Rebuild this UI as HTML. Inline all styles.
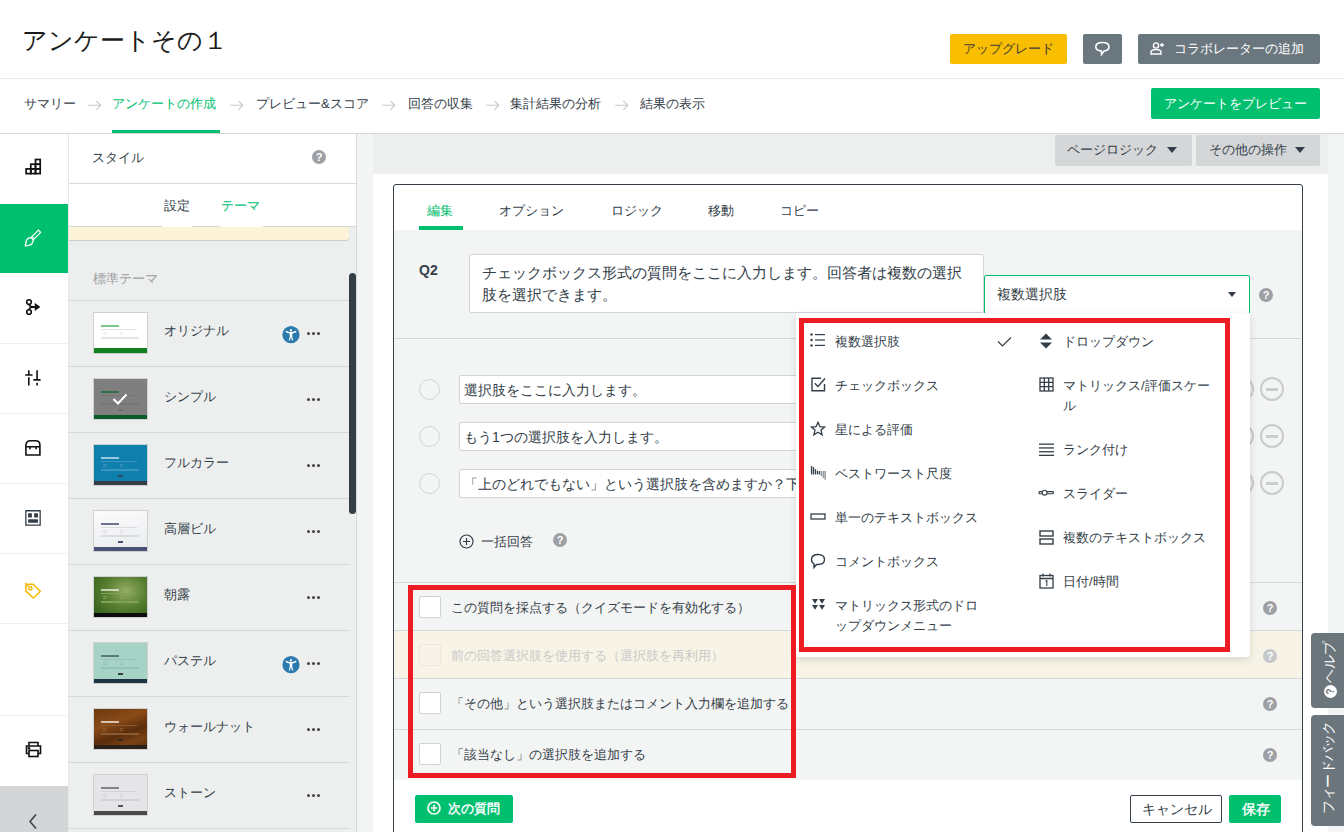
<!DOCTYPE html>
<html><head><meta charset="utf-8">
<style>
*{box-sizing:border-box;margin:0;padding:0}
html,body{width:1344px;height:832px;overflow:hidden;background:#fff;font-family:"Liberation Sans",sans-serif;color:#333e48}
.a{position:absolute}
.t{position:absolute;white-space:nowrap;line-height:1}
.btn{position:absolute;border-radius:2px}
.hl{position:absolute;height:1px;background:#d8d9da}
.q{position:absolute;width:14px;height:14px;border-radius:50%;background:#9da0a4;color:#fff;font-size:11px;font-weight:bold;text-align:center;line-height:14px}
</style></head><body>
<!-- header -->
<div class="t" style="left:22px;top:28px;font-size:25px;color:#1b1b1b">アンケートその１</div>
<div class="btn" style="left:950px;top:34px;width:117px;height:30px;background:#f9be00"></div>
<div class="t" style="left:963px;top:42px;font-size:13px;color:#3b3b3b">アップグレード</div>
<div class="btn" style="left:1083px;top:34px;width:39px;height:30px;background:#6b777e"></div>
<div class="btn" style="left:1138px;top:34px;width:182px;height:30px;background:#6b777e"></div>
<div class="t" style="left:1174px;top:42px;font-size:13px;color:#fff">コラボレーターの追加</div>
<div class="hl" style="left:0;top:78px;width:1344px;background:#eaebec"></div>

<!-- header icons -->
<svg class="a" style="left:1094px;top:41px" width="17" height="15" viewBox="0 0 17 15" fill="none" stroke="#fff" stroke-width="1.6"><path d="M8.5 1.5 C12.5 1.5 15 3 15 5.8 C15 8.3 12.8 9.8 10 10 L7.5 13.5 L7.3 10 C4 9.8 1.8 8.3 1.8 5.8 C1.8 3 4.5 1.5 8.5 1.5 Z"/></svg>
<svg class="a" style="left:1150px;top:42px" width="15" height="13" viewBox="0 0 15 13" fill="none" stroke="#fff" stroke-width="1.4"><circle cx="6" cy="3.5" r="2.6"/><path d="M1 12 V10.5 C1 8.5 3 7.5 6 7.5 C9 7.5 11 8.5 11 10.5 V12 Z"/><path d="M12 1 V5 M10 3 H14" stroke-width="1.3"/></svg>
<!-- nav arrows -->
<svg class="a" style="left:88px;top:100px" width="14" height="11" viewBox="0 0 14 11" fill="none" stroke="#c5c7c9" stroke-width="1.1"><path d="M0.3 5.3 H12.8 M8.3 0.8 L12.8 5.3 L8.3 9.8"/></svg>
<svg class="a" style="left:230px;top:100px" width="14" height="11" viewBox="0 0 14 11" fill="none" stroke="#c5c7c9" stroke-width="1.1"><path d="M0.3 5.3 H12.8 M8.3 0.8 L12.8 5.3 L8.3 9.8"/></svg>
<svg class="a" style="left:382px;top:100px" width="14" height="11" viewBox="0 0 14 11" fill="none" stroke="#c5c7c9" stroke-width="1.1"><path d="M0.3 5.3 H12.8 M8.3 0.8 L12.8 5.3 L8.3 9.8"/></svg>
<svg class="a" style="left:486px;top:100px" width="14" height="11" viewBox="0 0 14 11" fill="none" stroke="#c5c7c9" stroke-width="1.1"><path d="M0.3 5.3 H12.8 M8.3 0.8 L12.8 5.3 L8.3 9.8"/></svg>
<svg class="a" style="left:615px;top:100px" width="14" height="11" viewBox="0 0 14 11" fill="none" stroke="#c5c7c9" stroke-width="1.1"><path d="M0.3 5.3 H12.8 M8.3 0.8 L12.8 5.3 L8.3 9.8"/></svg>

<!-- nav -->
<div class="t" style="left:24px;top:97px;font-size:13px">サマリー</div>
<div class="t" style="left:112px;top:97px;font-size:13px;color:#00bf6f">アンケートの作成</div>
<div class="a" style="left:112px;top:130px;width:108px;height:3px;background:#00bf6f"></div>
<div class="t" style="left:256px;top:97px;font-size:13px">プレビュー&amp;スコア</div>
<div class="t" style="left:408px;top:97px;font-size:13px">回答の収集</div>
<div class="t" style="left:510px;top:97px;font-size:13px">集計結果の分析</div>
<div class="t" style="left:640px;top:97px;font-size:13px">結果の表示</div>
<div class="btn" style="left:1151px;top:88px;width:169px;height:31px;background:#00bf6f"></div>
<div class="t" style="left:1164px;top:97px;font-size:13px;color:#fff">アンケートをプレビュー</div>
<div class="hl" style="left:0;top:133px;width:1344px;background:#d4d5d6"></div>

<!-- left icon bar -->
<div class="a" style="left:0;top:134px;width:68px;height:698px;background:#fff"></div>
<div class="a" style="left:0;top:204px;width:68px;height:69px;background:#00bf6f"></div>
<div class="a" style="left:0;top:786px;width:68px;height:46px;background:#d4d5d7"></div>

<!-- theme panel -->
<div class="a" style="left:68px;top:134px;width:289px;height:698px;background:#edeeee;border-left:1px solid #e6e7e8;border-right:1px solid #d8d9da"></div>
<div class="a" style="left:69px;top:134px;width:287px;height:93px;background:#fff"></div>
<div class="hl" style="left:69px;top:183px;width:287px;background:#d8d9da"></div>
<div class="t" style="left:92px;top:151px;font-size:13px">スタイル</div>
<div class="q" style="left:312px;top:150px">?</div>
<div class="t" style="left:164px;top:199px;font-size:13px">設定</div>
<div class="t" style="left:221px;top:199px;font-size:13px;color:#00bf6f">テーマ</div>
<div class="hl" style="left:69px;top:226px;width:287px;background:#d8d9da"></div><div class="a" style="left:69px;top:227px;width:280px;height:13px;background:#fcf3d9;border-radius:0 0 3px 0;box-shadow:0 1px 1px rgba(0,0,0,.15)"></div>
<div class="a" style="left:162px;top:226px;width:30px;height:1px;background:#fff"></div><div class="a" style="left:220px;top:226px;width:43px;height:1px;background:#fff"></div>
<div class="t" style="left:93px;top:272px;font-size:13px;color:#9b9ea1">標準テーマ</div>
<div class="a" style="left:349px;top:273px;width:7px;height:241px;background:#333e48;border-radius:4px"></div>

<!-- main -->
<div class="a" style="left:357px;top:134px;width:987px;height:698px;background:#f3f4f4"></div>
<div class="a" style="left:373px;top:134px;width:955px;height:40px;background:#edeeee"></div>
<div class="a" style="left:373px;top:174px;width:955px;height:658px;background:#fff"></div>
<div class="btn" style="left:1055px;top:135px;width:137px;height:31px;background:#d5d6d8"></div>
<div class="t" style="left:1067px;top:143px;font-size:13px">ページロジック</div>
<div class="btn" style="left:1196px;top:135px;width:124px;height:31px;background:#d5d6d8"></div>
<div class="t" style="left:1209px;top:143px;font-size:13px">その他の操作</div>
<div class="a" style="left:1167px;top:147px;width:0;height:0;border-left:5.5px solid transparent;border-right:5.5px solid transparent;border-top:6px solid #333e48"></div>
<div class="a" style="left:1295px;top:147px;width:0;height:0;border-left:5.5px solid transparent;border-right:5.5px solid transparent;border-top:6px solid #333e48"></div>

<!-- card -->
<div class="a" style="left:393px;top:184px;width:910px;height:660px;border:1px solid #333e48;border-radius:3px;background:#fff"></div>
<div class="a" style="left:394px;top:230px;width:908px;height:550px;background:#f3f4f4"></div>
<div class="t" style="left:427px;top:204px;font-size:13px;color:#00bf6f">編集</div>
<div class="a" style="left:419px;top:226px;width:44px;height:4px;background:#00bf6f"></div>
<div class="t" style="left:499px;top:204px;font-size:13px">オプション</div>
<div class="t" style="left:611px;top:204px;font-size:13px">ロジック</div>
<div class="t" style="left:708px;top:204px;font-size:13px">移動</div>
<div class="t" style="left:780px;top:204px;font-size:13px">コピー</div>


<!-- icon bar icons -->
<div class="hl" style="left:0;top:343px;width:68px;background:#eeeff0"></div>
<div class="hl" style="left:0;top:413px;width:68px;background:#eeeff0"></div>
<div class="hl" style="left:0;top:483px;width:68px;background:#eeeff0"></div>
<div class="hl" style="left:0;top:553px;width:68px;background:#eeeff0"></div>
<div class="hl" style="left:0;top:623px;width:68px;background:#eeeff0"></div>
<div class="hl" style="left:0;top:715px;width:68px;background:#eeeff0"></div>
<svg class="a" style="left:24px;top:158px" width="18" height="19" viewBox="0 0 18 19" fill="none" stroke="#111" stroke-width="1.7">
<rect x="11.5" y="1.5" width="4.7" height="4.7"/><rect x="6.8" y="6.2" width="4.7" height="4.7"/><rect x="11.5" y="6.2" width="4.7" height="4.7"/>
<rect x="2.1" y="10.9" width="4.7" height="4.7"/><rect x="6.8" y="10.9" width="4.7" height="4.7"/><rect x="11.5" y="10.9" width="4.7" height="4.7"/></svg>
<svg class="a" style="left:24px;top:229px" width="18" height="19" viewBox="0 0 18 19" fill="none" stroke="#fff" stroke-width="1.3" stroke-linejoin="round">
<path d="M14.4 1.1 L16.7 3.4 L9.2 10.9 L6.9 8.6 Z M7.9 7.6 L10.2 9.9"/><path d="M6.9 8.7 C4.2 8.6 2 10.6 2 13.4 L1.3 16.9 L4.6 16.3 C7.3 16.3 9.3 14 9.2 11"/></svg>
<svg class="a" style="left:24px;top:298px" width="18" height="18" viewBox="0 0 18 18" fill="none" stroke="#111" stroke-width="1.6">
<circle cx="5" cy="4" r="2.3"/><circle cx="5" cy="14" r="2.3"/><path d="M5 6.3 C5 9 8 9 12 9 M5 11.7 C5 9 8 9 12 9"/><path d="M11.5 6.5 L15 9 L11.5 11.5 Z" fill="#111"/></svg>
<svg class="a" style="left:24px;top:368px" width="18" height="20" viewBox="0 0 18 20" fill="none" stroke="#111" stroke-width="1.6">
<path d="M4.8 2.2 V7 M4.8 9.3 V17.5 M1.2 7 H8.5 M13.1 2.2 V11.9 M13.1 14.8 V17.5 M9.4 11.9 H16.6"/></svg>
<svg class="a" style="left:24px;top:438px" width="18" height="20" viewBox="0 0 18 20" fill="none" stroke="#111" stroke-width="1.6">
<path d="M1.9 17 V7 C1.9 4.5 3.8 2.8 6.3 2.8 H11.5 C14 2.8 15.9 4.5 15.9 7 V17 Z M1.9 8.8 H15.9 M6 8.8 V11.3 M12.1 8.8 V11.3"/></svg>
<svg class="a" style="left:24px;top:508px" width="18" height="20" viewBox="0 0 18 20" fill="#333e48" stroke="none">
<path d="M1.2 2.1 H16.8 V17.7 H1.2 Z M2.5 3.4 V16.4 H15.5 V3.4 Z"/><rect x="4.1" y="5.2" width="3.8" height="4.4" rx=".6"/><rect x="10.1" y="5.2" width="3.9" height="4.4" rx=".6"/><rect x="4.1" y="11.2" width="9.9" height="3.6" rx=".6"/></svg>
<svg class="a" style="left:24px;top:580px" width="18" height="20" viewBox="0 0 18 20" fill="none" stroke="#f7b900" stroke-width="1.5" stroke-linejoin="round">
<path d="M2 6.2 C2 5 2.8 4.2 4 4.2 H9.1 L16.3 11.25 L9.3 18 L1.9 11.1 Z"/><circle cx="6.3" cy="8.4" r="1.7"/><path d="M1.3 3.1 L4.3 6.3"/></svg>
<svg class="a" style="left:25px;top:741px" width="17" height="17" viewBox="0 0 17 17" fill="none" stroke="#111" stroke-width="1.6">
<path d="M4 5 V1.5 H13 V5"/><path d="M4 12.5 H1.5 V5 H15.5 V12.5 H13"/><rect x="4" y="9.5" width="9" height="6"/><circle cx="4" cy="7.3" r=".6" fill="#111"/></svg>
<svg class="a" style="left:28px;top:813px" width="10" height="17" viewBox="0 0 10 17" fill="none" stroke="#333e48" stroke-width="1.5"><path d="M8 1.5 L2 8.5 L8 15.5"/></svg>

<!-- theme list -->
<div class="hl" style="left:69px;top:300px;width:280px;background:#d4d6d8"></div>
<div class="t" style="left:164px;top:324px;font-size:13px">オリジナル</div>
<div class="a" style="left:307px;top:332px;width:3px;height:3px;border-radius:50%;background:#444;box-shadow:5px 0 0 #444,10px 0 0 #444"></div>
<div class="hl" style="left:69px;top:366px;width:280px;background:#d4d6d8"></div>
<div class="t" style="left:164px;top:390px;font-size:13px">シンプル</div>
<div class="a" style="left:307px;top:398px;width:3px;height:3px;border-radius:50%;background:#444;box-shadow:5px 0 0 #444,10px 0 0 #444"></div>
<div class="hl" style="left:69px;top:432px;width:280px;background:#d4d6d8"></div>
<div class="t" style="left:164px;top:456px;font-size:13px">フルカラー</div>
<div class="a" style="left:307px;top:464px;width:3px;height:3px;border-radius:50%;background:#444;box-shadow:5px 0 0 #444,10px 0 0 #444"></div>
<div class="hl" style="left:69px;top:498px;width:280px;background:#d4d6d8"></div>
<div class="t" style="left:164px;top:522px;font-size:13px">高層ビル</div>
<div class="a" style="left:307px;top:530px;width:3px;height:3px;border-radius:50%;background:#444;box-shadow:5px 0 0 #444,10px 0 0 #444"></div>
<div class="hl" style="left:69px;top:564px;width:280px;background:#d4d6d8"></div>
<div class="t" style="left:164px;top:588px;font-size:13px">朝露</div>
<div class="a" style="left:307px;top:596px;width:3px;height:3px;border-radius:50%;background:#444;box-shadow:5px 0 0 #444,10px 0 0 #444"></div>
<div class="hl" style="left:69px;top:630px;width:280px;background:#d4d6d8"></div>
<div class="t" style="left:164px;top:654px;font-size:13px">パステル</div>
<div class="a" style="left:307px;top:662px;width:3px;height:3px;border-radius:50%;background:#444;box-shadow:5px 0 0 #444,10px 0 0 #444"></div>
<div class="hl" style="left:69px;top:696px;width:280px;background:#d4d6d8"></div>
<div class="t" style="left:164px;top:720px;font-size:13px">ウォールナット</div>
<div class="a" style="left:307px;top:728px;width:3px;height:3px;border-radius:50%;background:#444;box-shadow:5px 0 0 #444,10px 0 0 #444"></div>
<div class="hl" style="left:69px;top:762px;width:280px;background:#d4d6d8"></div>
<div class="t" style="left:164px;top:786px;font-size:13px">ストーン</div>
<div class="a" style="left:307px;top:794px;width:3px;height:3px;border-radius:50%;background:#444;box-shadow:5px 0 0 #444,10px 0 0 #444"></div>
<div class="hl" style="left:69px;top:828px;width:280px;background:#d4d6d8"></div>
<div class="a" style="left:93px;top:312px;width:55px;height:42px;background:#fff;border:1px solid #cfd0d2;overflow:hidden"><div class="a" style="left:7px;top:12px;width:18px;height:2px;background:#5cb870;opacity:.8"></div><div class="a" style="left:7px;top:16px;width:36px;height:1px;background:#e4e4e4"></div><div class="a" style="left:9px;top:19px;width:4px;height:1px;background:#e4e4e4"></div><div class="a" style="left:26px;top:19px;width:3px;height:1px;background:#e4e4e4"></div><div class="a" style="left:9px;top:21px;width:4px;height:1px;background:#e4e4e4"></div><div class="a" style="left:26px;top:21px;width:3px;height:1px;background:#e4e4e4"></div><div class="a" style="left:7px;top:24px;width:38px;height:2px;background:#e4e4e4"></div><div class="a" style="left:24px;top:30px;width:5px;height:2px;background:#fff"></div><div class="a" style="left:0;bottom:0;width:53px;height:5px;background:#11801e"></div></div>
<div class="a" style="left:93px;top:378px;width:55px;height:42px;background:#7f7f7f;border:1px solid #cfd0d2;overflow:hidden"><div class="a" style="left:7px;top:12px;width:18px;height:2px;background:#1e6a3c;opacity:.8"></div><div class="a" style="left:7px;top:16px;width:36px;height:1px;background:#767676"></div><div class="a" style="left:9px;top:19px;width:4px;height:1px;background:#767676"></div><div class="a" style="left:26px;top:19px;width:3px;height:1px;background:#767676"></div><div class="a" style="left:9px;top:21px;width:4px;height:1px;background:#767676"></div><div class="a" style="left:26px;top:21px;width:3px;height:1px;background:#767676"></div><div class="a" style="left:7px;top:24px;width:38px;height:2px;background:#767676"></div><div class="a" style="left:24px;top:30px;width:5px;height:2px;background:#707070"></div><div class="a" style="left:0;bottom:0;width:53px;height:4px;background:#0c5b2c"></div></div>
<div class="a" style="left:93px;top:444px;width:55px;height:42px;background:#0f7fad;border:1px solid #cfd0d2;overflow:hidden"><div class="a" style="left:7px;top:12px;width:18px;height:2px;background:#bcd9e8;opacity:.8"></div><div class="a" style="left:7px;top:16px;width:36px;height:1px;background:#3c95bf"></div><div class="a" style="left:9px;top:19px;width:4px;height:1px;background:#3c95bf"></div><div class="a" style="left:26px;top:19px;width:3px;height:1px;background:#3c95bf"></div><div class="a" style="left:9px;top:21px;width:4px;height:1px;background:#3c95bf"></div><div class="a" style="left:26px;top:21px;width:3px;height:1px;background:#3c95bf"></div><div class="a" style="left:7px;top:24px;width:38px;height:2px;background:#3c95bf"></div><div class="a" style="left:24px;top:30px;width:5px;height:2px;background:#2b4a5c"></div><div class="a" style="left:0;bottom:0;width:53px;height:4px;background:#333e48"></div></div>
<div class="a" style="left:93px;top:510px;width:55px;height:42px;background:linear-gradient(170deg,#fbfbfb,#e9ebee);border:1px solid #cfd0d2;overflow:hidden"><div class="a" style="left:7px;top:12px;width:18px;height:2px;background:#4a5175;opacity:.8"></div><div class="a" style="left:7px;top:16px;width:36px;height:1px;background:#dadbdf"></div><div class="a" style="left:9px;top:19px;width:4px;height:1px;background:#dadbdf"></div><div class="a" style="left:26px;top:19px;width:3px;height:1px;background:#dadbdf"></div><div class="a" style="left:9px;top:21px;width:4px;height:1px;background:#dadbdf"></div><div class="a" style="left:26px;top:21px;width:3px;height:1px;background:#dadbdf"></div><div class="a" style="left:7px;top:24px;width:38px;height:2px;background:#dadbdf"></div><div class="a" style="left:24px;top:30px;width:5px;height:2px;background:#4a5175"></div><div class="a" style="left:0;bottom:0;width:53px;height:4px;background:#4a5175"></div></div>
<div class="a" style="left:93px;top:576px;width:55px;height:42px;background:radial-gradient(ellipse at 60% 35%,#95ad66,#587f30 45%,#2f5a18);border:1px solid #cfd0d2;overflow:hidden"><div class="a" style="left:7px;top:12px;width:18px;height:2px;background:#dfe8cf;opacity:.8"></div><div class="a" style="left:7px;top:16px;width:36px;height:1px;background:#80a05a"></div><div class="a" style="left:9px;top:19px;width:4px;height:1px;background:#80a05a"></div><div class="a" style="left:26px;top:19px;width:3px;height:1px;background:#80a05a"></div><div class="a" style="left:9px;top:21px;width:4px;height:1px;background:#80a05a"></div><div class="a" style="left:26px;top:21px;width:3px;height:1px;background:#80a05a"></div><div class="a" style="left:7px;top:24px;width:38px;height:2px;background:#80a05a"></div><div class="a" style="left:24px;top:30px;width:5px;height:2px;background:#5c7a3a"></div><div class="a" style="left:0;bottom:0;width:53px;height:4px;background:#0d0d0d"></div></div>
<div class="a" style="left:93px;top:642px;width:55px;height:42px;background:#a7d3c6;border:1px solid #cfd0d2;overflow:hidden"><div class="a" style="left:7px;top:12px;width:18px;height:2px;background:#4a6464;opacity:.8"></div><div class="a" style="left:7px;top:16px;width:36px;height:1px;background:#94c2b5"></div><div class="a" style="left:9px;top:19px;width:4px;height:1px;background:#94c2b5"></div><div class="a" style="left:26px;top:19px;width:3px;height:1px;background:#94c2b5"></div><div class="a" style="left:9px;top:21px;width:4px;height:1px;background:#94c2b5"></div><div class="a" style="left:26px;top:21px;width:3px;height:1px;background:#94c2b5"></div><div class="a" style="left:7px;top:24px;width:38px;height:2px;background:#94c2b5"></div><div class="a" style="left:24px;top:30px;width:5px;height:2px;background:#2f3f45"></div><div class="a" style="left:0;bottom:0;width:53px;height:4px;background:#1f3443"></div></div>
<div class="a" style="left:93px;top:708px;width:55px;height:42px;background:linear-gradient(160deg,#6b3a12,#8a4a17 35%,#5a2d0c 60%,#7c4215 80%,#4e270b);border:1px solid #cfd0d2;overflow:hidden"><div class="a" style="left:7px;top:12px;width:18px;height:2px;background:#efe2d4;opacity:.8"></div><div class="a" style="left:7px;top:16px;width:36px;height:1px;background:#8c5a30"></div><div class="a" style="left:9px;top:19px;width:4px;height:1px;background:#8c5a30"></div><div class="a" style="left:26px;top:19px;width:3px;height:1px;background:#8c5a30"></div><div class="a" style="left:9px;top:21px;width:4px;height:1px;background:#8c5a30"></div><div class="a" style="left:26px;top:21px;width:3px;height:1px;background:#8c5a30"></div><div class="a" style="left:7px;top:24px;width:38px;height:2px;background:#8c5a30"></div><div class="a" style="left:24px;top:30px;width:5px;height:2px;background:#3a2a1e"></div><div class="a" style="left:0;bottom:0;width:53px;height:4px;background:#2b211a"></div></div>
<div class="a" style="left:93px;top:774px;width:55px;height:42px;background:#e4e4e9;border:1px solid #cfd0d2;overflow:hidden"><div class="a" style="left:7px;top:12px;width:18px;height:2px;background:#6a6a70;opacity:.8"></div><div class="a" style="left:7px;top:16px;width:36px;height:1px;background:#d2d2d8"></div><div class="a" style="left:9px;top:19px;width:4px;height:1px;background:#d2d2d8"></div><div class="a" style="left:26px;top:19px;width:3px;height:1px;background:#d2d2d8"></div><div class="a" style="left:9px;top:21px;width:4px;height:1px;background:#d2d2d8"></div><div class="a" style="left:26px;top:21px;width:3px;height:1px;background:#d2d2d8"></div><div class="a" style="left:7px;top:24px;width:38px;height:2px;background:#d2d2d8"></div><div class="a" style="left:24px;top:30px;width:5px;height:2px;background:#555"></div><div class="a" style="left:0;bottom:0;width:53px;height:4px;background:#4b4b4b"></div></div>
<svg class="a" style="left:112px;top:393px" width="16" height="12" viewBox="0 0 16 12" fill="none" stroke="#fff" stroke-width="2"><path d="M1.5 6 L6 10.5 L14.5 1.5"/></svg>
<svg class="a" style="left:282px;top:326px" width="18" height="18" viewBox="0 0 18 18"><circle cx="9" cy="8.7" r="8.6" fill="#2c79ad"/><rect x="8" y="3.3" width="2" height="2" fill="#fff"/><path d="M4.3 5.6 C6 6.6 7.5 6.8 9 6.8 C10.5 6.8 12 6.6 13.7 5.6" stroke="#fff" stroke-width="1.4" fill="none" stroke-linecap="round"/><path d="M7.6 6.8 H10.4 L10.2 10.5 L11.2 14.6 H10.1 L9 11 L7.9 14.6 H6.8 L7.8 10.5 Z" fill="#fff"/></svg>
<svg class="a" style="left:282px;top:656px" width="18" height="18" viewBox="0 0 18 18"><circle cx="9" cy="8.7" r="8.6" fill="#2c79ad"/><rect x="8" y="3.3" width="2" height="2" fill="#fff"/><path d="M4.3 5.6 C6 6.6 7.5 6.8 9 6.8 C10.5 6.8 12 6.6 13.7 5.6" stroke="#fff" stroke-width="1.4" fill="none" stroke-linecap="round"/><path d="M7.6 6.8 H10.4 L10.2 10.5 L11.2 14.6 H10.1 L9 11 L7.9 14.6 H6.8 L7.8 10.5 Z" fill="#fff"/></svg>

<!-- card content -->
<div class="t" style="left:419px;top:263px;font-size:14px;font-weight:bold;color:#333e48">Q2</div>
<div class="a" style="left:469px;top:254px;width:515px;height:59px;background:#fff;border:1px solid #d2d4d6;border-radius:2px"></div>
<div class="a" style="left:482px;top:262px;width:484px;font-size:15px;line-height:22px;color:#333e48">チェックボックス形式の質問をここに入力します。回答者は複数の選択肢を選択できます。</div>
<div class="a" style="left:984px;top:275px;width:266px;height:40px;background:#fff;border:1px solid #00bf6f;border-radius:2px"></div>
<div class="t" style="left:997px;top:287px;font-size:14px">複数選択肢</div>
<div class="a" style="left:1228px;top:292px;width:0;height:0;border-left:4.5px solid transparent;border-right:4.5px solid transparent;border-top:5px solid #333e48"></div>
<div class="q" style="left:1259px;top:288px">?</div>
<div class="hl" style="left:394px;top:338px;width:907px;background:#d4d6d8"></div>
<div class="a" style="left:419px;top:379px;width:21px;height:21px;border:1px solid #d0d2d4;border-radius:50%;background:#f3f4f4"></div>
<div class="a" style="left:459px;top:375px;width:772px;height:29px;background:#fff;border:1px solid #d2d4d6;border-radius:2px;overflow:hidden"><div class="t" style="left:4px;top:7px;font-size:14px">選択肢をここに入力します。</div></div>
<div class="a" style="left:1230px;top:377px;width:24px;height:24px;border:2px solid #c9cbcd;border-radius:50%"></div>
<div class="a" style="left:1260px;top:377px;width:24px;height:24px;border:2px solid #c9cbcd;border-radius:50%"><div class="a" style="left:4px;top:8.5px;width:12px;height:3px;background:#c9cbcd"></div></div>
<div class="a" style="left:419px;top:426px;width:21px;height:21px;border:1px solid #d0d2d4;border-radius:50%;background:#f3f4f4"></div>
<div class="a" style="left:459px;top:422px;width:772px;height:29px;background:#fff;border:1px solid #d2d4d6;border-radius:2px;overflow:hidden"><div class="t" style="left:4px;top:7px;font-size:14px">もう1つの選択肢を入力します。</div></div>
<div class="a" style="left:1230px;top:424px;width:24px;height:24px;border:2px solid #c9cbcd;border-radius:50%"></div>
<div class="a" style="left:1260px;top:424px;width:24px;height:24px;border:2px solid #c9cbcd;border-radius:50%"><div class="a" style="left:4px;top:8.5px;width:12px;height:3px;background:#c9cbcd"></div></div>
<div class="a" style="left:419px;top:473px;width:21px;height:21px;border:1px solid #d0d2d4;border-radius:50%;background:#f3f4f4"></div>
<div class="a" style="left:459px;top:469px;width:772px;height:29px;background:#fff;border:1px solid #d2d4d6;border-radius:2px;overflow:hidden"><div class="t" style="left:4px;top:7px;font-size:14px">「上のどれでもない」という選択肢を含めますか？下のチェックボックスを使用してください。</div></div>
<div class="a" style="left:1230px;top:471px;width:24px;height:24px;border:2px solid #c9cbcd;border-radius:50%"></div>
<div class="a" style="left:1260px;top:471px;width:24px;height:24px;border:2px solid #c9cbcd;border-radius:50%"><div class="a" style="left:4px;top:8.5px;width:12px;height:3px;background:#c9cbcd"></div></div>

<svg class="a" style="left:459px;top:534px" width="15" height="15" viewBox="0 0 15 15" fill="none" stroke="#333e48" stroke-width="1.2"><circle cx="7.5" cy="7.5" r="6.5"/><path d="M7.5 4 V11 M4 7.5 H11"/></svg>
<div class="t" style="left:481px;top:535px;font-size:13px">一括回答</div>
<div class="q" style="left:553px;top:533px">?</div>
<div class="hl" style="left:394px;top:582px;width:908px;background:#d4d6d8"></div>
<div class="a" style="left:394px;top:631px;width:908px;height:47px;background:#f7f3e6"></div>
<div class="hl" style="left:394px;top:630px;width:908px;background:#d4d6d8"></div>
<div class="hl" style="left:394px;top:678px;width:908px;background:#d4d6d8"></div>
<div class="hl" style="left:394px;top:729px;width:908px;background:#d4d6d8"></div>
<div class="a" style="left:419px;top:596px;width:22px;height:22px;border:1px solid #d0d2d4;border-radius:2px;background:#fff"></div>
<div class="t" style="left:451px;top:601px;font-size:13px;color:#333e48">この質問を採点する（クイズモードを有効化する）</div>
<div class="q" style="left:1263px;top:601px;background:#9da0a4">?</div>
<div class="a" style="left:419px;top:644px;width:22px;height:22px;border:1px solid #ece8dc;border-radius:2px;background:#f7f3e9"></div>
<div class="t" style="left:451px;top:649px;font-size:13px;color:#c9c9c9">前の回答選択肢を使用する（選択肢を再利用）</div>
<div class="q" style="left:1263px;top:649px;background:#c5c8cb">?</div>
<div class="a" style="left:419px;top:692px;width:22px;height:22px;border:1px solid #d0d2d4;border-radius:2px;background:#fff"></div>
<div class="t" style="left:451px;top:697px;font-size:13px;color:#333e48">「その他」という選択肢またはコメント入力欄を追加する</div>
<div class="q" style="left:1263px;top:697px;background:#9da0a4">?</div>
<div class="a" style="left:419px;top:743px;width:22px;height:22px;border:1px solid #d0d2d4;border-radius:2px;background:#fff"></div>
<div class="t" style="left:451px;top:748px;font-size:13px;color:#333e48">「該当なし」の選択肢を追加する</div>
<div class="q" style="left:1263px;top:748px;background:#9da0a4">?</div>

<div class="btn" style="left:415px;top:795px;width:98px;height:28px;background:#00bf6f"></div>
<svg class="a" style="left:427px;top:801px" width="14" height="14" viewBox="0 0 14 14" fill="none" stroke="#fff" stroke-width="1.7"><circle cx="7" cy="7" r="6"/><path d="M7 3.8 V10.2 M3.8 7 H10.2"/></svg>
<div class="t" style="left:448px;top:802px;font-size:13px;color:#fff;-webkit-text-stroke:0.4px #fff">次の質問</div>
<div class="btn" style="left:1130px;top:795px;width:92px;height:28px;background:#fff;border:1px solid #333e48"></div>
<div class="t" style="left:1142px;top:802px;font-size:14px">キャンセル</div>
<div class="btn" style="left:1229px;top:795px;width:52px;height:28px;background:#00bf6f"></div>
<div class="t" style="left:1242px;top:802px;font-size:14px;color:#fff;-webkit-text-stroke:0.4px #fff">保存</div>

<!-- dropdown -->
<div class="a" style="left:796px;top:313px;width:454px;height:344px;background:#fff;border-radius:0 0 3px 3px;box-shadow:0 3px 8px rgba(0,0,0,.12)"></div>
<div class="a" style="left:799px;top:318px;width:431px;height:334px;border:5px solid #ec1b24"></div>
<div class="a" style="left:408px;top:585px;width:388px;height:193px;border:5px solid #ec1b24"></div>


<!-- dropdown items -->
<svg class="a" style="left:810px;top:333px" width="16" height="14" viewBox="0 0 16 14" fill="#333e48"><circle cx="1.5" cy="1.5" r="1.2"/><circle cx="1.5" cy="7" r="1.2"/><circle cx="1.5" cy="12.5" r="1.2"/><rect x="5" y="1" width="10" height="1.2"/><rect x="5" y="6.4" width="10" height="1.2"/><rect x="5" y="11.8" width="10" height="1.2"/></svg>
<div class="t" style="left:835px;top:335px;font-size:13px">複数選択肢</div>
<svg class="a" style="left:997px;top:336px" width="15" height="12" viewBox="0 0 15 12" fill="none" stroke="#333e48" stroke-width="1.2"><path d="M1 5.5 L5.5 10 L14 1.5"/></svg>
<svg class="a" style="left:811px;top:377px" width="15" height="15" viewBox="0 0 15 15" fill="none" stroke="#333e48" stroke-width="1.4"><path d="M13.5 7 V13.8 H1 V1.2 H10"/><path d="M3.8 6.2 L7 9.5 L14 1.5"/></svg>
<div class="t" style="left:835px;top:379px;font-size:13px">チェックボックス</div>
<svg class="a" style="left:810px;top:421px" width="16" height="16" viewBox="0 0 16 16" fill="none" stroke="#333e48" stroke-width="1.3"><path d="M8 1.3 L9.9 5.6 L14.6 6 L11 9.1 L12.1 13.8 L8 11.3 L3.9 13.8 L5 9.1 L1.4 6 L6.1 5.6 Z"/></svg>
<div class="t" style="left:835px;top:423px;font-size:13px">星による評価</div>
<svg class="a" style="left:810px;top:466px" width="17" height="15" viewBox="0 0 17 15"><g fill="#333e48"><rect x="0.9" y="0" width="1.3" height="8.5" rx=".6"/><rect x="2.8" y="1" width="1.3" height="7.5" rx=".6"/><rect x="4.8" y="3" width="1.3" height="5.5" rx=".6"/><rect x="6.8" y="4.5" width="1.3" height="4" rx=".6"/><rect x="8.8" y="5" width="1.3" height="3.5" rx=".6"/></g><g fill="#8a8f94"><rect x="10.7" y="5" width="1.3" height="5"/><rect x="12.6" y="5" width="1.3" height="7"/><rect x="14.4" y="5" width="1.4" height="8.6"/></g></svg>
<div class="t" style="left:835px;top:467px;font-size:13px">ベストワースト尺度</div>
<svg class="a" style="left:810px;top:513px" width="16" height="8" viewBox="0 0 16 8" fill="none" stroke="#333e48" stroke-width="1.3"><rect x="1" y="1" width="14" height="5"/></svg>
<div class="t" style="left:835px;top:511px;font-size:13px">単一のテキストボックス</div>
<svg class="a" style="left:810px;top:553px" width="16" height="16" viewBox="0 0 16 16" fill="none" stroke="#333e48" stroke-width="1.4"><path d="M8 1.5 C12 1.5 14.5 3.5 14.5 6.5 C14.5 9.5 12 11.5 8 11.5 L6.5 11.5 L4 14.5 L4 10.8 C2.3 10 1.5 8.5 1.5 6.5 C1.5 3.5 4 1.5 8 1.5 Z"/></svg>
<div class="t" style="left:835px;top:555px;font-size:13px">コメントボックス</div>
<svg class="a" style="left:811px;top:598px" width="15" height="13" viewBox="0 0 15 13" fill="#333e48"><path d="M1 1 H7 L4 5.7 Z M8 1 H14 L11 5.7 Z M1 7 H7 L4 11.7 Z M8 7 H14 L11 11.7 Z"/></svg>
<div class="t" style="left:835px;top:599px;font-size:13px">マトリックス形式のドロ</div>
<div class="t" style="left:835px;top:619px;font-size:13px">ップダウンメニュー</div>

<svg class="a" style="left:1039px;top:333px" width="14" height="16" viewBox="0 0 14 16" fill="#333e48"><path d="M7 0.5 L13 6.5 H1 Z M1 9.5 H13 L7 15.5 Z"/></svg>
<div class="t" style="left:1063px;top:335px;font-size:13px">ドロップダウン</div>
<svg class="a" style="left:1039px;top:377px" width="15" height="15" viewBox="0 0 15 15" fill="none" stroke="#333e48" stroke-width="1.3"><rect x="1" y="1" width="13" height="13"/><path d="M5.3 1 V14 M9.7 1 V14 M1 5.3 H14 M1 9.7 H14"/></svg>
<div class="t" style="left:1063px;top:379px;font-size:13px">マトリックス/評価スケー</div>
<div class="t" style="left:1063px;top:399px;font-size:13px">ル</div>
<svg class="a" style="left:1039px;top:443px" width="15" height="13" viewBox="0 0 15 13" fill="#333e48"><rect x="0" y="0.5" width="15" height="1.3"/><rect x="0" y="4.3" width="15" height="1.3"/><rect x="0" y="8.1" width="15" height="1.3"/><rect x="0" y="11.7" width="15" height="1.3"/></svg>
<div class="t" style="left:1063px;top:443px;font-size:13px">ランク付け</div>
<svg class="a" style="left:1038px;top:489px" width="17" height="8" viewBox="0 0 17 8" fill="none" stroke="#333e48" stroke-width="1.1"><rect x="1" y="2.6" width="14.4" height="2.2" rx=".8"/><circle cx="6.6" cy="3.7" r="2.4" fill="#fff"/></svg>
<div class="t" style="left:1063px;top:487px;font-size:13px">スライダー</div>
<svg class="a" style="left:1039px;top:530px" width="15" height="15" viewBox="0 0 15 15" fill="none" stroke="#333e48" stroke-width="1.4"><rect x="1" y="1" width="13" height="5"/><rect x="1" y="9" width="13" height="5"/></svg>
<div class="t" style="left:1063px;top:531px;font-size:13px">複数のテキストボックス</div>
<svg class="a" style="left:1039px;top:573px" width="15" height="16" viewBox="0 0 15 16" fill="none" stroke="#333e48" stroke-width="1.3"><rect x="1" y="2.5" width="13" height="12.5"/><path d="M1 5.5 H14 M4 0.5 V3.5 M11 0.5 V3.5"/><path d="M6.5 8.5 L7.8 7.6 V13" stroke-width="1.1"/></svg>
<div class="t" style="left:1063px;top:575px;font-size:13px">日付/時間</div>
<!-- side tabs -->
<div class="a" style="left:1311px;top:633px;width:40px;height:75px;background:#6b757c;border-radius:4px"></div>
<div class="a" style="left:1311px;top:715px;width:40px;height:111px;background:#6b757c;border-radius:4px"></div>
<div class="t" style="left:1322px;top:683px;font-size:14px;color:#fff;transform:rotate(-90deg);transform-origin:0 0">ヘルプ</div>
<div class="a" style="left:1323.5px;top:685px;width:13px;height:13px;border-radius:50%;background:#fff;color:#6b757c;font-size:10px;font-weight:bold;text-align:center;line-height:13px;transform:rotate(-90deg)">?</div>
<div class="t" style="left:1321px;top:814px;font-size:14px;letter-spacing:-0.8px;color:#fff;transform:rotate(-90deg);transform-origin:0 0">フィードバック</div>
</body></html>
